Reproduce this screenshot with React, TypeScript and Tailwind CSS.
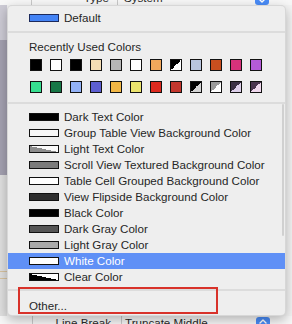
import React from "react"

type Bar = { name: string; swatch: string }

const font = "font-['Liberation_Sans',Arial,sans-serif]"

// recently used colours, two rows of twelve
const recentRows: string[][] = [
  [
    "bg-black",
    "bg-white",
    "bg-black",
    "bg-[#f4ddb4]",
    "bg-[#b6b6b6]",
    "bg-white",
    "bg-[#f2a85c]",
    "bg-[linear-gradient(to_bottom_right,#000_50%,#fff_50%)]",
    "bg-[#b9c5de]",
    "bg-[#c94f1f]",
    "bg-[#d6327b]",
    "bg-[#b45bd8]",
  ],
  [
    "bg-[#36df90]",
    "bg-[#177747]",
    "bg-[#93b2f7]",
    "bg-[#5d5fd1]",
    "bg-[#f2b745]",
    "bg-[#ece46d]",
    "bg-[#dd2a1f]",
    "bg-[#c4372e]",
    "bg-[linear-gradient(to_bottom_right,#000_50%,#d4d4d4_50%)]",
    "bg-[linear-gradient(to_bottom_right,#9b9b9b_50%,#fff_50%)]",
    "bg-[linear-gradient(to_bottom_right,#3c3245_50%,#ddd0ea_50%)]",
    "bg-[linear-gradient(to_bottom_right,#4b3650_50%,#f0d9ee_50%)]",
  ],
]

const systemColors: Bar[] = [
  { name: "Dark Text Color", swatch: "bg-black" },
  { name: "Group Table View Background Color", swatch: "bg-[#f7f7f7]" },
  { name: "Light Text Color", swatch: "bg-[linear-gradient(to_top_right,#8c8c8c_50%,#fafafa_50%)]" },
  { name: "Scroll View Textured Background Color", swatch: "bg-[#7b7b7b]" },
  { name: "Table Cell Grouped Background Color", swatch: "bg-white" },
  { name: "View Flipside Background Color", swatch: "bg-[#2f2f2f]" },
  { name: "Black Color", swatch: "bg-black" },
  { name: "Dark Gray Color", swatch: "bg-[#555555]" },
  { name: "Light Gray Color", swatch: "bg-[#aaaaaa]" },
  { name: "White Color", swatch: "bg-white" },
  { name: "Clear Color", swatch: "bg-[linear-gradient(to_top_right,#000_50%,#fff_50%)]" },
]

const SELECTED = "White Color"

function Separator({ className = "" }: { className?: string }) {
  return <div className={`h-[2px] bg-[#dcdcdc] ${className}`} />
}

function ColorRow({ item }: { item: Bar }) {
  const selected = item.name === SELECTED
  return (
    <div
      className={`flex h-[16px] items-center pl-[21px] ${
        selected ? "bg-[#5f90f6] text-white" : "text-[#262626]"
      }`}
    >
      <div className={`h-[8px] w-[30px] shrink-0 border border-[#111] ${item.swatch}`} />
      <span className="ml-[5px] whitespace-nowrap text-[11.6px] leading-none">{item.name}</span>
    </div>
  )
}

function Chevron({ up = false }: { up?: boolean }) {
  return (
    <svg width="8" height="5" viewBox="0 0 8 5" fill="none">
      <path
        d={up ? "M1 4 L4 1 L7 4" : "M1 1 L4 4 L7 1"}
        stroke="white"
        strokeWidth="1.4"
        strokeLinecap="round"
        strokeLinejoin="round"
      />
    </svg>
  )
}

function ColorMenu() {
  return (
    <div className="absolute left-[7px] top-[5px] h-[311px] w-[279px] overflow-hidden rounded-[5px] border border-[#c8c8c8]/60 bg-[#eeeeee] pt-[4px] shadow-[0_4px_12px_rgba(0,0,0,0.28)]">
      {/* default */}
      <div className="flex h-[16px] items-center pl-[21px] text-[#262626]">
        <div className="h-[8px] w-[30px] border border-[#1c2a5c] bg-[#4383f5]" />
        <span className="ml-[5px] text-[11.6px] leading-none">Default</span>
      </div>

      <Separator className="mt-[5px]" />

      <div className="mt-[6px] flex h-[16px] items-center pl-[21px] text-[11.6px] leading-none text-[#262626]">
        Recently Used Colors
      </div>

      <div className="mt-[4px] flex flex-col gap-[10px] pl-[22px]">
        {recentRows.map((row, r) => (
          <div key={r} className="flex gap-[8px]">
            {row.map((c, i) => (
              <div key={i} className={`h-[12px] w-[12px] border border-[#111] ${c}`} />
            ))}
          </div>
        ))}
      </div>

      <Separator className="mt-[9px]" />

      <div className="mt-[5px] flex flex-col">
        {systemColors.map((item) => (
          <ColorRow key={item.name} item={item} />
        ))}
      </div>

      <Separator className="mt-[4px]" />

      <div className="mt-[7px] flex h-[16px] items-center pl-[21px] text-[11.6px] leading-none text-[#262626]">
        Other...
      </div>

      {/* scroller edge */}
      <div className="absolute right-[1px] top-[98px] h-[132px] w-[2px] rounded-full bg-[#d0d0d0]" />

      {/* red annotation box */}
      <div className="absolute left-[10px] top-[281px] h-[27px] w-[200px] border-2 border-[#d8322a]" />
    </div>
  )
}

export default function App() {
  return (
    <div className={`relative h-[324px] w-[292px] overflow-hidden bg-[#f3f3f3] ${font}`}>
      <div className="flex h-full flex-col">
        {/* top inspector row, cut off */}
        <div className="h-[5px] overflow-hidden bg-[#f7f7f7]">
          <div className="-mt-[9px] flex h-[14px] items-stretch text-[11.6px] leading-[14px] text-[#2a2a2a]">
            <div className="w-[32px] border-r border-[#c9c9c9]" />
            <div className="w-[86px] border-r border-[#c9c9c9] pr-[8px] text-right">Type</div>
            <div className="w-[137px] pl-[6px]">System</div>
            <div className="flex h-[14px] w-[14px] items-end justify-center rounded-[3px] bg-[#4a8cf7] pb-[2px]">
              <Chevron />
            </div>
          </div>
        </div>

        {/* middle: sidebar strip on the left */}
        <div className="flex flex-1">
          <div className="flex w-[7px] flex-col">
            <div className="h-[35px] bg-[#cdcbd5]" />
            <div className="h-[135px] bg-[#a4a1b1]" />
            <div className="flex flex-1 flex-col bg-[#e0e0e0]">
              <div className="mt-[96px] h-px bg-[#d8c3a0]" />
              <div className="mt-[6px] h-px bg-[#d8c3a0]" />
            </div>
          </div>
          <div className="flex-1" />
        </div>

        {/* bottom inspector row, cut off */}
        <div className="h-[8px] overflow-hidden bg-[#f7f7f7]">
          <div className="flex h-[14px] items-stretch text-[11.6px] leading-[12px] text-[#2a2a2a]">
            <div className="w-[33px] border-r border-[#c9c9c9]" />
            <div className="w-[89px] border-r border-[#c9c9c9] pr-[10px] pt-[1px] text-right">Line Break</div>
            <div className="w-[134px] pl-[3px] pt-[1px]">Truncate Middle</div>
            <div className="mt-[1px] flex h-[14px] w-[14px] flex-col items-center rounded-[3px] bg-[#4a8cf7] pt-[2px]">
              <Chevron up />
            </div>
          </div>
        </div>
      </div>

      <ColorMenu />
    </div>
  )
}
